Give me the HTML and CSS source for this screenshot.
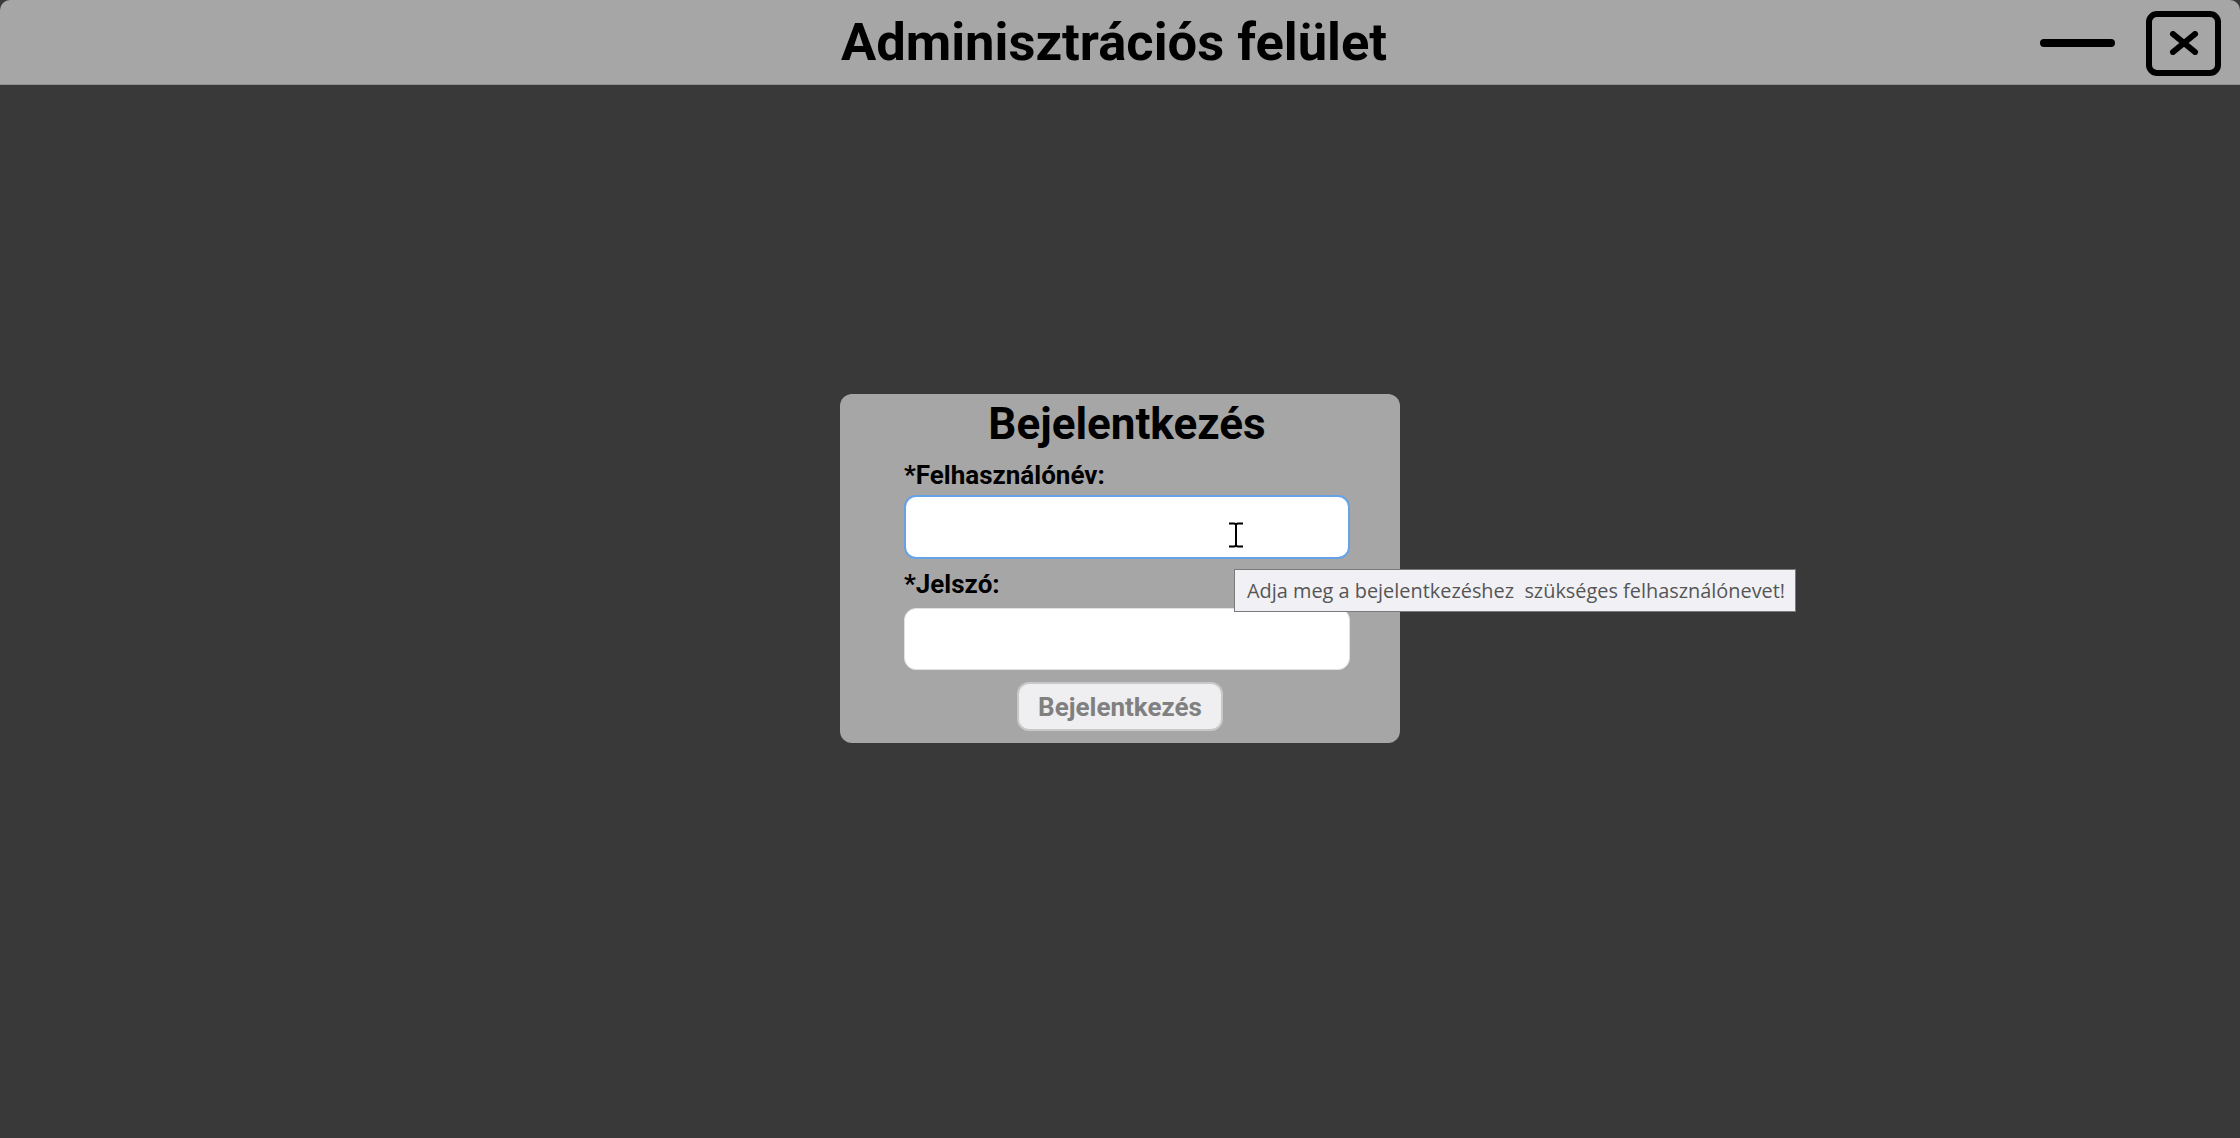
FILE: index.html
```html
<!DOCTYPE html>
<html lang="hu">
<head>
<meta charset="utf-8">
<title>Adminisztrációs felület</title>
<link rel="stylesheet" href="styles.css">
</head>
<body>
<div class="window">
  <header class="titlebar">
    <div class="spacer"></div>
    <h1 class="app-title">Adminisztrációs felület</h1>
    <div class="controls">
      <div class="btn-min" aria-label="Minimize"></div>
      <div class="btn-close" aria-label="Close">
        <svg width="30" height="24" viewBox="0 0 30 24"><path d="M4 3 L26 21 M26 3 L4 21" stroke="#000" stroke-width="6" stroke-linecap="round"/></svg>
      </div>
    </div>
  </header>
  <main class="content">
    <form class="card">
      <h2 class="card-title">Bejelentkezés</h2>
      <div class="fields">
        <label class="label label-first">*Felhasználónév:</label>
        <div class="input input-focused"></div>
        <label class="label label-second">*Jelszó:</label>
        <div class="input input-second"></div>
      </div>
      <div class="actions">
        <div class="submit">Bejelentkezés</div>
      </div>
    </form>
  </main>
</div>
<svg class="cursor" width="16" height="26" viewBox="0 0 16 26"><path d="M1 1.5 H6 Q8 1.5 8 3.5 V22.5 Q8 24.5 10 24.5 H15 M1 24.5 H6 Q8 24.5 8 22.5 M8 3.5 Q8 1.5 10 1.5 H15" fill="none" stroke="#000" stroke-width="2"/></svg>
<div class="tooltip">Adja meg a bejelentkezéshez&nbsp; szükséges felhasználónevet!</div>
</body>
</html>
```
FILE: styles.css
```css
html, body {
  margin: 0;
  padding: 0;
}
body {
  background: #393939;
  width: 2240px;
  height: 1138px;
  overflow: hidden;
  font-family: Roboto, "Liberation Sans", sans-serif;
  position: relative;
}
.window {
  display: flex;
  flex-direction: column;
  height: 100%;
}
.titlebar {
  height: 84px;
  background: #a6a6a6;
  border-bottom: 1px solid #8e8e8e;
  border-radius: 10px 10px 0 0;
  display: grid;
  grid-template-columns: 1fr auto 1fr;
  align-items: center;
}
.app-title {
  margin: 0;
  font-size: 52.5px;
  font-weight: 700;
  color: #000;
  line-height: 82px;
  padding-right: 12px;
}
.controls {
  justify-self: end;
  display: flex;
  align-items: center;
  gap: 31px;
  padding-right: 19px;
  padding-top: 2px;
}
.btn-min {
  width: 75px;
  height: 8px;
  background: #000;
  border-radius: 4px;
}
.btn-close {
  box-sizing: border-box;
  width: 75px;
  height: 65px;
  border: 6px solid #000;
  border-radius: 11px;
  display: flex;
  align-items: center;
  justify-content: center;
}
.content {
  flex: 1;
  display: flex;
  justify-content: center;
  align-items: flex-start;
  padding-top: 309px;
}
.card {
  width: 560px;
  box-sizing: border-box;
  background: #a6a6a6;
  border-radius: 12px;
  padding: 4px 50px 12px 64px;
  display: flex;
  flex-direction: column;
}
.card-title {
  margin: 0;
  text-align: center;
  font-size: 44px;
  line-height: 52px;
  font-weight: 700;
  color: #000;
}
.fields {
  display: flex;
  flex-direction: column;
}
.label {
  font-size: 26px;
  line-height: 30px;
  font-weight: 700;
  color: #000;
}
.label-first {
  margin-top: 10px;
  margin-bottom: 5px;
}
.label-second {
  margin-top: 10px;
  margin-bottom: 9px;
}
.input {
  box-sizing: border-box;
  background: #fff;
  border-radius: 12px;
}
.input-focused {
  height: 64px;
  border: 2px solid #66a2e8;
}
.input-second {
  height: 62px;
  border: 1px solid #e2e2e2;
}
.actions {
  display: flex;
  justify-content: center;
  margin-top: 12px;
  padding-right: 14px;
}
.submit {
  box-sizing: border-box;
  width: 206px;
  height: 49px;
  background: #efeff1;
  border: 2px solid #c8c8c8;
  border-radius: 12px;
  color: #808080;
  font-size: 26px;
  font-weight: 700;
  display: flex;
  align-items: center;
  justify-content: center;
}
.cursor {
  position: absolute;
  left: 1228px;
  top: 522px;
}
.tooltip {
  position: absolute;
  left: 1234px;
  top: 569px;
  width: 562px;
  height: 43px;
  box-sizing: border-box;
  background: #f1f1f5;
  border: 1px solid #7a7a7a;
  color: #555;
  font-family: "Open Sans", "Noto Sans", sans-serif;
  font-size: 19.9px;
  line-height: 41px;
  padding-left: 12px;
  white-space: nowrap;
}
```
